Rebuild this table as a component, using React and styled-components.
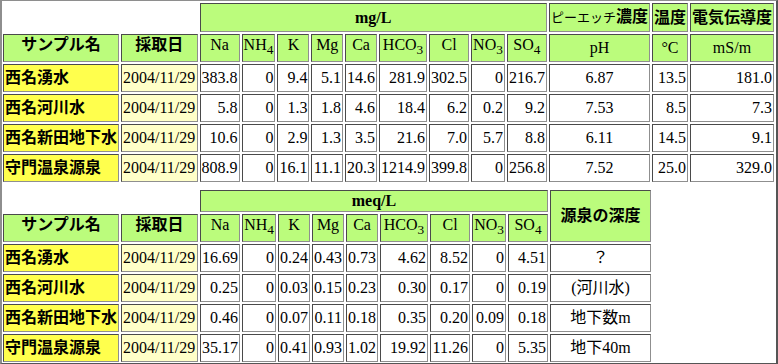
import React from 'react';
import styled, { createGlobalStyle } from 'styled-components';

const GlobalStyle = createGlobalStyle`
  html, body {
    margin: 0;
    padding: 0;
    background: #fff;
  }
  body {
    font-family: "Liberation Serif", "Noto Sans CJK JP", serif;
    font-size: 16px;
    color: #000;
  }
`;

const GREEN = '#bbfc7c';
const YELLOW = '#ffff4d';
const PALE = '#ffffc8';

const IONS = [
  { label: 'Na', w: 40 },
  { label: 'NH', sub: '4', w: 34 },
  { label: 'K', w: 32 },
  { label: 'Mg', w: 32 },
  { label: 'Ca', w: 32 },
  { label: 'HCO', sub: '3', w: 48 },
  { label: 'Cl', w: 40 },
  { label: 'NO', sub: '3', w: 34 },
  { label: 'SO', sub: '4', w: 40 },
];

const MG_ROWS = [
  ['西名湧水', '383.8', '0', '9.4', '5.1', '14.6', '281.9', '302.5', '0', '216.7', '6.87', '13.5', '181.0'],
  ['西名河川水', '5.8', '0', '1.3', '1.8', '4.6', '18.4', '6.2', '0.2', '9.2', '7.53', '8.5', '7.3'],
  ['西名新田地下水', '10.6', '0', '2.9', '1.3', '3.5', '21.6', '7.0', '5.7', '8.8', '6.11', '14.5', '9.1'],
  ['守門温泉源泉', '808.9', '0', '16.1', '11.1', '20.3', '1214.9', '399.8', '0', '256.8', '7.52', '25.0', '329.0'],
];

const MEQ_ROWS = [
  ['西名湧水', '16.69', '0', '0.24', '0.43', '0.73', '4.62', '8.52', '0', '4.51', '？'],
  ['西名河川水', '0.25', '0', '0.03', '0.15', '0.23', '0.30', '0.17', '0', '0.19', '(河川水)'],
  ['西名新田地下水', '0.46', '0', '0.07', '0.11', '0.18', '0.35', '0.20', '0.09', '0.18', '地下数m'],
  ['守門温泉源泉', '35.17', '0', '0.41', '0.93', '1.02', '19.92', '11.26', '0', '5.35', '地下40m'],
];

const Frame = styled.div`
  box-sizing: border-box;
  width: 778px;
  height: 364px;
  overflow: hidden;
  border-style: solid;
  border-width: 1px 2px 1px 2px;
  border-color: #8e8e8e #555 #555 #8e8e8e;
`;

const Table = styled.table`
  border-collapse: separate;
  border-spacing: 2px;
  margin-left: -1px;

  & + & {
    margin-top: 4px;
  }
`;

const Cell = styled.td`
  box-sizing: border-box;
  padding: 1px;
  border: 1px solid;
  border-color: #4a4a4a #8f8f8f #8f8f8f #4a4a4a;
  line-height: ${(p) => p.$lh || 24}px;
  white-space: nowrap;
  vertical-align: middle;
  text-align: ${(p) => p.$align || 'right'};
  background: ${(p) => p.$bg || '#fff'};
  font-weight: ${(p) => (p.$bold ? 'bold' : 'normal')};
`;

const HeadCell = styled(Cell)`
  background: ${GREEN};
  text-align: center;

  ${(p) =>
    p.$raised &&
    `
    vertical-align: top;
    padding: 0 1px 6px;
    line-height: 20px;
  `}
`;

const Blank = styled.td`
  padding: 0;
  border: none;
`;

const Sub = styled.sub`
  line-height: 0;
  font-size: smaller;
`;

const Kana = styled.span`
  font-size: 13px;
  font-weight: normal;
`;

const IonHeads = () =>
  IONS.map((ion) => (
    <HeadCell key={ion.label + (ion.sub || '')} $raised style={{ width: ion.w }}>
      {ion.label}
      {ion.sub && <Sub>{ion.sub}</Sub>}
    </HeadCell>
  ));

const SampleCells = ({ name }) => (
  <>
    <Cell $bg={YELLOW} $bold $align="left">
      {name}
    </Cell>
    <Cell $bg={PALE} $align="left">
      2004/11/29
    </Cell>
  </>
);

const MgTable = () => (
  <Table>
    <tbody>
      <tr>
        <Blank colSpan={2} />
        <HeadCell colSpan={9} $bold>
          mg/L
        </HeadCell>
        <HeadCell $bold>
          <Kana>ピーエッチ</Kana>濃度
        </HeadCell>
        <HeadCell $bold>温度</HeadCell>
        <HeadCell $bold>電気伝導度</HeadCell>
      </tr>
      <tr>
        <HeadCell $bold $raised style={{ width: 116 }}>
          サンプル名
        </HeadCell>
        <HeadCell $bold $raised style={{ width: 77 }}>
          採取日
        </HeadCell>
        <IonHeads />
        <HeadCell style={{ width: 101 }}>pH</HeadCell>
        <HeadCell style={{ width: 36 }}>°C</HeadCell>
        <HeadCell style={{ width: 83 }}>mS/m</HeadCell>
      </tr>
      {MG_ROWS.map(([name, ...vals]) => (
        <tr key={name}>
          <SampleCells name={name} />
          {vals.slice(0, 9).map((v, i) => (
            <Cell key={i}>{v}</Cell>
          ))}
          <Cell $align="center">{vals[9]}</Cell>
          <Cell>{vals[10]}</Cell>
          <Cell>{vals[11]}</Cell>
        </tr>
      ))}
    </tbody>
  </Table>
);

const MeqTable = () => (
  <Table>
    <tbody>
      <tr>
        <Blank colSpan={2} />
        <HeadCell colSpan={9} $bold $lh={18}>
          meq/L
        </HeadCell>
        <HeadCell rowSpan={2} $bold style={{ width: 101 }}>
          源泉の深度
        </HeadCell>
      </tr>
      <tr>
        <HeadCell $bold $raised style={{ width: 116 }}>
          サンプル名
        </HeadCell>
        <HeadCell $bold $raised style={{ width: 77 }}>
          採取日
        </HeadCell>
        <IonHeads />
      </tr>
      {MEQ_ROWS.map(([name, ...vals]) => (
        <tr key={name}>
          <SampleCells name={name} />
          {vals.slice(0, 9).map((v, i) => (
            <Cell key={i}>{v}</Cell>
          ))}
          <Cell $align="center">{vals[9]}</Cell>
        </tr>
      ))}
    </tbody>
  </Table>
);

export default function App() {
  return (
    <>
      <GlobalStyle />
      <Frame>
        <MgTable />
        <MeqTable />
      </Frame>
    </>
  );
}
